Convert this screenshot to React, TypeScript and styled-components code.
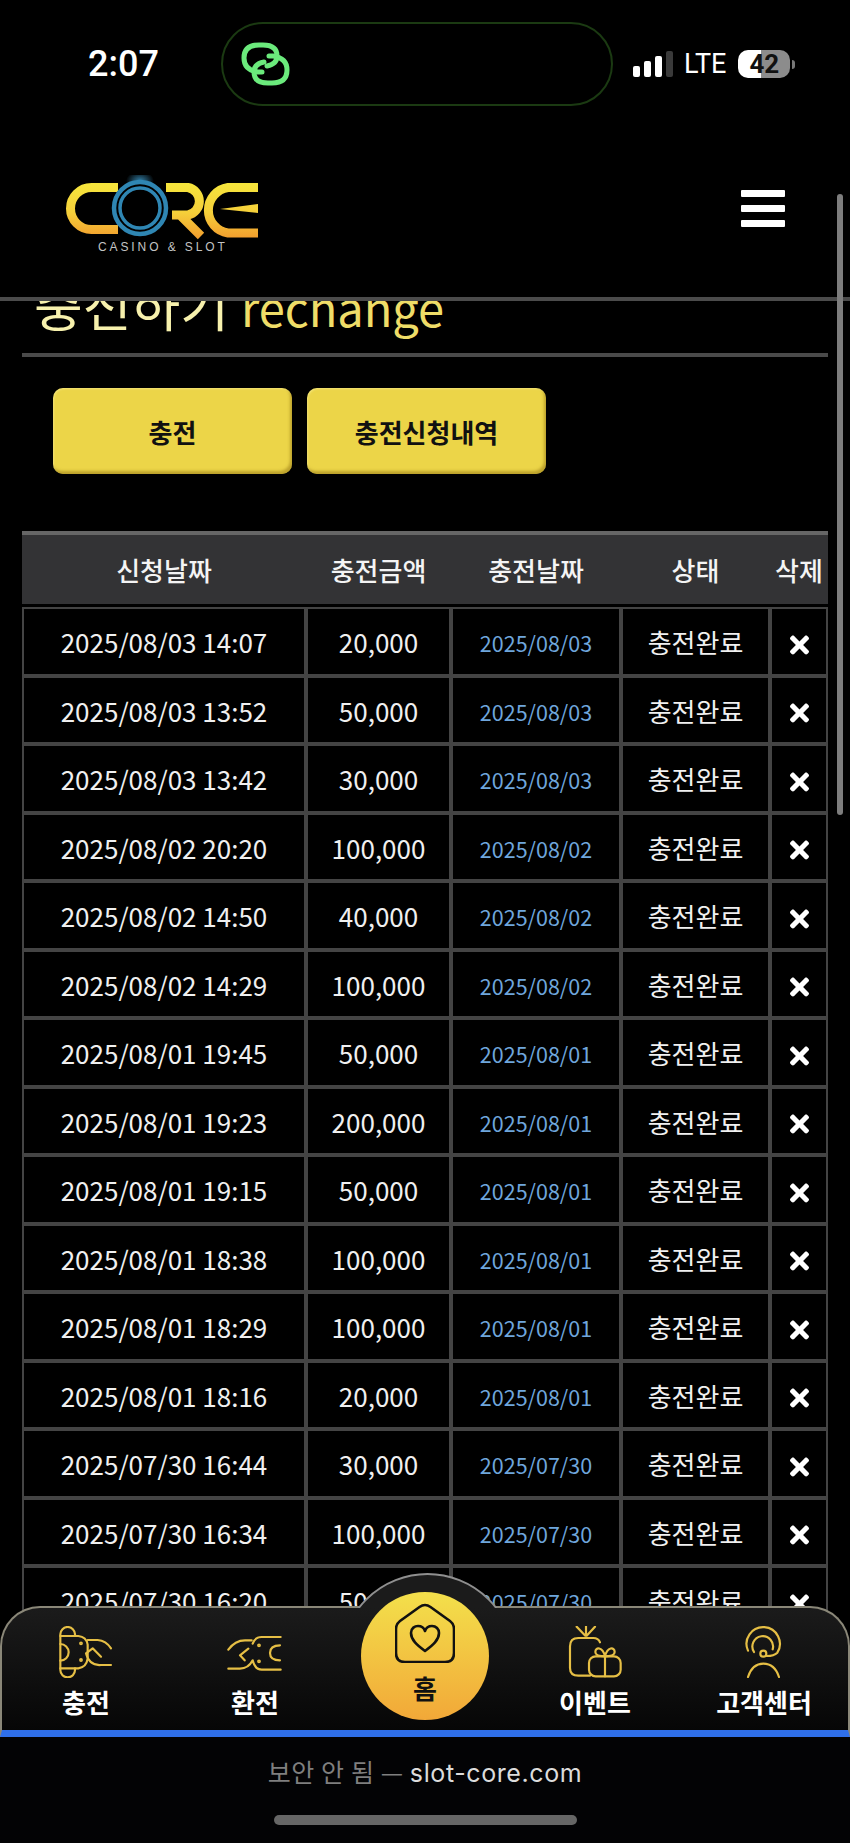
import React from "react";
import styled, { createGlobalStyle } from "styled-components";
import { FaTimes } from "react-icons/fa";

const GlobalStyle = createGlobalStyle`
  html, body {
    margin: 0;
    padding: 0;
    background: #000;
  }
  * {
    box-sizing: border-box;
  }
`;

const Shell = styled.div`
  position: relative;
  width: 850px;
  height: 1843px;
  display: flex;
  flex-direction: column;
  overflow: hidden;
  background: #000;
  color: #f0f0f0;
  font-family: "Noto Sans CJK KR", "Noto Sans", sans-serif;
`;

/* status bar */
const StatusBar = styled.div`
  display: flex;
  align-items: center;
  height: 106px;
  padding: 22px 0 0 88px;
  flex-shrink: 0;
`;
const Time = styled.div`
  width: 133px;
  font-family: Roboto, sans-serif;
  font-size: 36px;
  font-weight: 500;
  color: #fff;
`;
const Island = styled.div`
  width: 392px;
  height: 84px;
  display: flex;
  align-items: center;
  padding-left: 18px;
  border: 2px solid #1b3a12;
  border-radius: 42px;
`;
const StatusRight = styled.div`
  display: flex;
  align-items: center;
  margin-left: 20px;
`;
const Signal = styled.div`
  display: flex;
  align-items: flex-end;
  gap: 4px;
  height: 26px;
`;
const SignalBar = styled.span<{ $h: number; $dim?: boolean }>`
  width: 7px;
  height: ${(p) => p.$h}px;
  border-radius: 2px;
  background: ${(p) => (p.$dim ? "#3a3a3a" : "#fff")};
`;
const Lte = styled.div`
  margin-left: 11px;
  font-family: Roboto, sans-serif;
  font-size: 27px;
  color: #fff;
  line-height: 1;
`;
const Battery = styled.div`
  width: 52px;
  height: 28px;
  margin-left: 12px;
  display: flex;
  align-items: center;
  justify-content: center;
  border-radius: 10px;
  background: linear-gradient(90deg, #fff 44%, #8c8c8c 44%);
  color: #111;
  font-family: Roboto, sans-serif;
  font-size: 26px;
  font-weight: 700;
`;
const BatteryNub = styled.span`
  width: 3px;
  height: 9px;
  margin-left: 2px;
  border-radius: 0 3px 3px 0;
  background: #777;
`;

/* header */
const Header = styled.header`
  height: 195px;
  flex-shrink: 0;
  display: flex;
  justify-content: space-between;
  padding: 69px 65px 0 60px;
  border-bottom: 4px solid #4b4b4b;
  background: #000;
`;
const Burger = styled.div`
  display: flex;
  flex-direction: column;
  gap: 8px;
  margin-top: 15px;
`;
const BurgerLine = styled.span`
  width: 44px;
  height: 7px;
  border-radius: 1px;
  background: #fff;
`;

/* page content */
const Viewport = styled.div`
  position: relative;
  flex: 1;
  min-height: 0;
`;
const Content = styled.main`
  height: 100%;
  overflow: hidden;
  padding: 0 22px;
`;
const Title = styled.h1`
  height: 56px;
  margin: -25px 0 0;
  padding: 0 0 21px 12px;
  box-sizing: content-box;
  border-bottom: 4px solid #4a4a4a;
  font-size: 53px;
  line-height: 56px;
  font-weight: 400;
  color: #f7f1ad;
  white-space: nowrap;
  > span {
    font-size: 47px;
    color: #efdd68;
  }
`;
const ButtonRow = styled.div`
  display: flex;
  gap: 15px;
  margin-top: 31px;
  padding-left: 31px;
`;
const ActionButton = styled.button`
  width: 239px;
  height: 86px;
  border: none;
  border-radius: 10px;
  background: #ecd548;
  box-shadow: inset -2px -3px 3px rgba(150, 120, 20, 0.55), inset 1px 1px 2px rgba(255, 250, 190, 0.4);
  color: #111;
  font-family: inherit;
  font-size: 26px;
  font-weight: 700;
`;
const tableColumns = "284px 145px 170px 149px 58px";
const TableHead = styled.div`
  display: grid;
  grid-template-columns: ${tableColumns};
  height: 73px;
  margin-top: 57px;
  margin-bottom: 3px;
  border-top: 4px solid #666;
  background: #333335;
`;
const HeadCell = styled.div`
  display: flex;
  align-items: center;
  justify-content: center;
  font-size: 26px;
  font-weight: 500;
  color: #f4f4f4;
`;
const TableRow = styled.div`
  display: grid;
  grid-template-columns: ${tableColumns};
  height: 68.5px;
`;
const Cell = styled.div`
  display: flex;
  align-items: center;
  justify-content: center;
  border: 2px solid #444;
  padding-top: 1px;
  font-size: 26px;
  color: #f0f0f0;
`;
const DateLink = styled.span`
  font-size: 21.5px;
  padding-top: 2px;
  color: #6fa6dc;
`;
const DeleteIcon = styled(FaTimes)`
  width: 19px;
  height: 28px;
  margin-top: 6px;
  color: #fff;
`;
const ScrollThumb = styled.div`
  position: absolute;
  top: 194px;
  left: 837px;
  width: 6px;
  height: 621px;
  border-radius: 3px;
  background: #7d7d7d;
`;

/* bottom nav */
const TabBar = styled.nav`
  position: absolute;
  left: 0;
  right: 0;
  bottom: 0;
  height: 131px;
  display: grid;
  grid-template-columns: 168px 170px 170px 170px 168px;
  border: 2px solid #8a8778;
  border-bottom: 7px solid #2f6fea;
  border-radius: 40px 40px 0 0;
  background: linear-gradient(180deg, #1b1b1b 0%, #060606 100%);
`;
const TabItem = styled.div`
  position: relative;
  display: flex;
  flex-direction: column;
  align-items: center;
  padding-top: 18px;
`;
const TabIcon = styled.svg`
  height: 52px;
  width: 70px;
  fill: none;
  stroke: #e6bf45;
  stroke-width: 6.5;
  stroke-linecap: round;
  stroke-linejoin: round;
`;
const TabLabel = styled.div`
  margin-top: 9px;
  font-size: 26px;
  line-height: 30px;
  font-weight: 700;
  color: #fff;
  white-space: nowrap;
`;
const HomeCap = styled.div`
  position: absolute;
  top: -35px;
  left: 50%;
  width: 171px;
  height: 35px;
  margin-left: -85.5px;
  overflow: hidden;
  &::before {
    content: "";
    display: block;
    width: 171px;
    height: 171px;
    border: 2px solid #8f8f8f;
    border-radius: 50%;
    background: #1b1b1b;
  }
`;
const HomeButton = styled.div`
  position: absolute;
  top: -16px;
  left: 50%;
  width: 128px;
  height: 128px;
  margin-left: -64px;
  display: flex;
  flex-direction: column;
  align-items: center;
  padding-top: 11px;
  border-radius: 50%;
  background: linear-gradient(180deg, #f3e04b 0%, #f2a838 100%);
`;
const HomeIcon = styled.svg`
  width: 60px;
  height: 60px;
  fill: none;
  stroke: #111;
  stroke-width: 2.6;
  stroke-linejoin: round;
`;
const HomeLabel = styled.div`
  margin-top: 10px;
  font-size: 26px;
  line-height: 30px;
  font-weight: 700;
  color: #111;
`;

/* browser bar */
const BrowserBar = styled.div`
  height: 106px;
  flex-shrink: 0;
  display: flex;
  flex-direction: column;
  align-items: center;
  padding-top: 18px;
  background: #030305;
`;
const UrlLine = styled.div`
  height: 32px;
  font-size: 25px;
  line-height: 32px;
  letter-spacing: 0.6px;
  color: #7f7f7f;
  > span {
    font-family: Inter, sans-serif;
    color: #dcdcdc;
  }
`;
const HomeIndicator = styled.div`
  width: 303px;
  height: 10px;
  margin-top: 28px;
  border-radius: 5px;
  background: #666;
`;

const rows = [
  ["2025/08/03 14:07", "20,000", "2025/08/03"],
  ["2025/08/03 13:52", "50,000", "2025/08/03"],
  ["2025/08/03 13:42", "30,000", "2025/08/03"],
  ["2025/08/02 20:20", "100,000", "2025/08/02"],
  ["2025/08/02 14:50", "40,000", "2025/08/02"],
  ["2025/08/02 14:29", "100,000", "2025/08/02"],
  ["2025/08/01 19:45", "50,000", "2025/08/01"],
  ["2025/08/01 19:23", "200,000", "2025/08/01"],
  ["2025/08/01 19:15", "50,000", "2025/08/01"],
  ["2025/08/01 18:38", "100,000", "2025/08/01"],
  ["2025/08/01 18:29", "100,000", "2025/08/01"],
  ["2025/08/01 18:16", "20,000", "2025/08/01"],
  ["2025/07/30 16:44", "30,000", "2025/07/30"],
  ["2025/07/30 16:34", "100,000", "2025/07/30"],
  ["2025/07/30 16:20", "50,000", "2025/07/30"],
];

function Logo() {
  return (
    <svg width="210" height="82" viewBox="0 0 210 82" fill="none">
      <defs>
        <linearGradient id="coreGold" gradientUnits="userSpaceOnUse" x1="0" y1="8" x2="0" y2="62">
          <stop offset="0" stopColor="#f6e63c" />
          <stop offset="0.55" stopColor="#f5cf3a" />
          <stop offset="1" stopColor="#f2a02e" />
        </linearGradient>
        <radialGradient id="coreGlow">
          <stop offset="0" stopColor="#3f9fd0" stopOpacity="0.8" />
          <stop offset="1" stopColor="#3f9fd0" stopOpacity="0" />
        </radialGradient>
      </defs>
      <ellipse cx="80" cy="6" rx="14" ry="10" fill="url(#coreGlow)" />
      <path d="M58 12.5 H31.5 A21 21 0 0 0 31.5 54.5 H58" stroke="url(#coreGold)" strokeWidth="9" />
      <path d="M106 12.5 H128 A14 14 0 0 1 128 40 H112 M120 40 L141 61" stroke="url(#coreGold)" strokeWidth="9" />
      <path d="M198 12.5 H168 A23 23 0 0 0 168 58 H198" stroke="url(#coreGold)" strokeWidth="9" />
      <path d="M198 29 V38 L160 34 Z" fill="url(#coreGold)" />
      <circle cx="80" cy="33" r="28" fill="#000" />
      <circle cx="80" cy="33" r="26" stroke="#2f86b3" strokeWidth="4.5" />
      <circle cx="80" cy="33" r="20" stroke="#2f86b3" strokeWidth="3.5" />
      <text x="38" y="76" fill="#c4c4c4" fontFamily="Liberation Sans, sans-serif" fontSize="12" letterSpacing="2.9">
        CASINO &amp; SLOT
      </text>
    </svg>
  );
}

function LinkIcon() {
  return (
    <svg width="49" height="44" viewBox="0 0 49 44" fill="none" stroke="#6bea7c" strokeWidth="5" strokeLinecap="round">
      <path d="M21 30 H17 Q3 28 3 16 Q3 3 18 3 H22 Q36 3 36 14 Q36 22 26 24" />
      <path d="M28 14 H32 Q46 16 46 28 Q46 41 31 41 H27 Q13 41 13 30 Q13 22 23 20" />
    </svg>
  );
}

export default function App() {
  return (
    <Shell>
      <GlobalStyle />
      <StatusBar>
        <Time>2:07</Time>
        <Island>
          <LinkIcon />
        </Island>
        <StatusRight>
          <Signal>
            <SignalBar $h={11} />
            <SignalBar $h={16} />
            <SignalBar $h={21} />
            <SignalBar $h={26} $dim />
          </Signal>
          <Lte>LTE</Lte>
          <Battery>42</Battery>
          <BatteryNub />
        </StatusRight>
      </StatusBar>

      <Header>
        <Logo />
        <Burger>
          <BurgerLine />
          <BurgerLine />
          <BurgerLine />
        </Burger>
      </Header>

      <Viewport>
        <Content>
          <Title>
            충전하기 <span>rechange</span>
          </Title>
          <ButtonRow>
            <ActionButton>충전</ActionButton>
            <ActionButton>충전신청내역</ActionButton>
          </ButtonRow>
          <TableHead>
            <HeadCell>신청날짜</HeadCell>
            <HeadCell>충전금액</HeadCell>
            <HeadCell>충전날짜</HeadCell>
            <HeadCell>상태</HeadCell>
            <HeadCell>삭제</HeadCell>
          </TableHead>
          {rows.map(([requested, amount, charged]) => (
            <TableRow key={requested}>
              <Cell>{requested}</Cell>
              <Cell>{amount}</Cell>
              <Cell>
                <DateLink>{charged}</DateLink>
              </Cell>
              <Cell>충전완료</Cell>
              <Cell>
                <DeleteIcon />
              </Cell>
            </TableRow>
          ))}
        </Content>

        <TabBar>
          <TabItem>
            <TabIcon viewBox="0 0 210 156">
              <path d="M28 30 V25 A22 22 0 0 1 72 25 V30 M28 127 V132 A22 22 0 0 0 72 132 V127" />
              <path d="M28 30 H82 Q106 32 110 56 V98 Q106 124 82 127 H28 Z" />
              <path d="M28 54 A25 25 0 0 1 28 104" />
              <path d="M110 42 H140 Q165 44 180 67 M105 82 L125 67 L150 92 M105 82 Q115 120 150 117 H180" />
              <circle cx="90" cy="52" r="2.5" />
              <circle cx="90" cy="102" r="2.5" />
            </TabIcon>
            <TabLabel>충전</TabLabel>
          </TabItem>
          <TabItem>
            <TabIcon viewBox="0 0 210 156">
              <path d="M182 33 H125 Q105 33 98 53 M25 71 Q45 43 75 43 H95 M60 88 L85 68 M60 88 L74 103" />
              <path d="M25 128 H60 Q85 128 98 103 Q105 131 125 131 H182" />
              <path d="M180 58 Q150 58 150 81 Q150 103 180 103" />
              <circle cx="117" cy="58" r="2.5" />
              <circle cx="117" cy="106" r="2.5" />
            </TabIcon>
            <TabLabel>환전</TabLabel>
          </TabItem>
          <TabItem>
            <HomeCap />
            <HomeButton>
              <HomeIcon viewBox="0 0 60 60">
                <path d="M24.5 4 Q30 0 35.5 4 L55 18 Q59 21 59 26 V50 Q59 59 50 59 H10 Q1 59 1 50 V26 Q1 21 5 18 Z" />
                <path d="M30 48 C22 42 16 37 16 30 C16 25 20 23 23 23 C26 23 29 25 30 28 C31 25 34 23 37 23 C41 23 44 26 44 30 C44 37 38 42 30 48 Z" />
              </HomeIcon>
              <HomeLabel>홈</HomeLabel>
            </HomeButton>
          </TabItem>
          <TabItem>
            <TabIcon viewBox="0 0 210 156">
              <path d="M50 2 L76 29 M78 -3 V29 M105 2 L80 29" />
              <path d="M120 49 Q115 36 100 36 H55 Q30 36 30 61 V126 Q30 149 55 149 H90" />
              <rect x="87" y="91" width="95" height="60" rx="20" />
              <path d="M135 91 V151" />
              <path d="M135 91 C120 91 106 88 106 78 C106 62 128 62 135 91 C142 62 164 62 164 78 C164 88 150 91 135 91" />
            </TabIcon>
            <TabLabel>이벤트</TabLabel>
          </TabItem>
          <TabItem>
            <TabIcon viewBox="0 -2 180 156">
              <path d="M42 72 A50 50 0 1 1 130 78 Q120 88 98 88" />
              <path d="M60 76 A31 31 0 1 1 116 68" />
              <circle cx="88" cy="81" r="9" />
              <path d="M42 151 Q55 111 88 111 Q122 111 135 151" />
            </TabIcon>
            <TabLabel>고객센터</TabLabel>
          </TabItem>
        </TabBar>
      </Viewport>

      <BrowserBar>
        <UrlLine>
          보안 안 됨 — <span>slot-core.com</span>
        </UrlLine>
        <HomeIndicator />
      </BrowserBar>

      <ScrollThumb />
    </Shell>
  );
}
